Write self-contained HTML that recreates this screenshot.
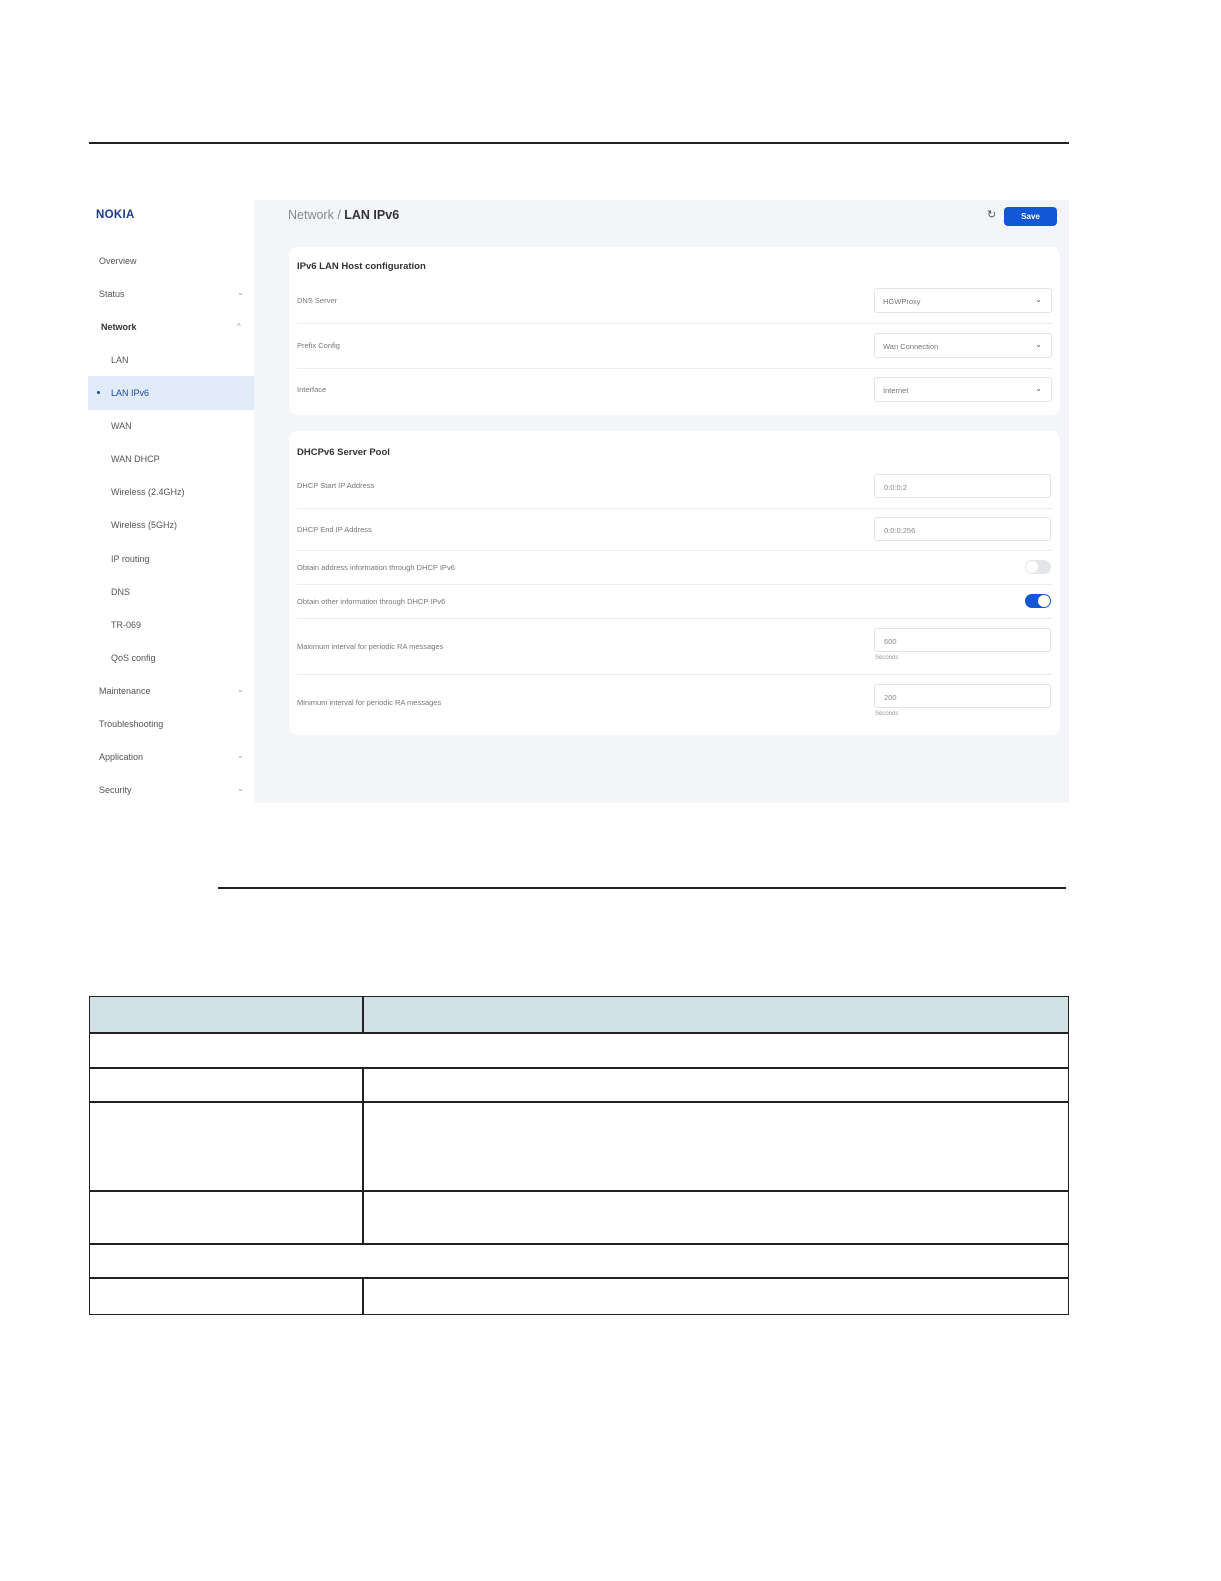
<!DOCTYPE html>
<html><head><meta charset="utf-8"><style>
*{margin:0;padding:0;box-sizing:border-box}
body{width:1221px;height:1581px;background:#fff;position:relative;font-family:"Liberation Sans",sans-serif;overflow:hidden}
.a{position:absolute}
.nav{font-size:9px;color:#555}
.lbl{font-size:7.5px;color:#777}
.sel{position:absolute;left:874px;width:178px;height:25px;border:1px solid #e2e5ea;border-radius:3px;background:#fff;font-size:7.5px;color:#777;padding:8px 0 0 8px}
.sel i{position:absolute;right:9px;top:6px;font-style:normal;font-size:8px;color:#555}
.inp{position:absolute;left:874px;width:177px;height:24px;border:1px solid #e2e5ea;border-radius:3px;background:#fff;font-size:7.5px;color:#888;padding:8px 0 0 9px}
.hr{position:absolute;left:297px;width:755px;height:1px;background:#e8ebef}
.chev{position:absolute;left:237px;font-size:8px;color:#999}
.tb{position:absolute;border:1.5px solid #222}
</style></head><body>
<div class="a" style="left:89px;top:142px;width:980px;height:2px;background:#222"></div>

<div class="a" style="left:88px;top:200px;width:166px;height:603px;background:#fff"></div>
<div class="a" style="left:254px;top:200px;width:815px;height:603px;background:#f3f5f8"></div>
<div class="a" style="left:96px;top:209px;font-size:11.5px;font-weight:bold;color:#1a3a8a;letter-spacing:0.3px">NOKIA</div>

<div class="a nav" style="left:99px;top:256px">Overview</div>
<div class="a nav" style="left:99px;top:289px">Status</div><div class="chev" style="top:288px">⌄</div>
<div class="a nav" style="left:101px;top:322px;font-weight:bold;color:#333">Network</div><div class="chev" style="top:322px">^</div>
<div class="a nav" style="left:111px;top:355px">LAN</div>
<div class="a" style="left:88px;top:376px;width:166px;height:34px;background:#e1ebf7"></div>
<div class="a" style="left:97px;top:391px;width:3px;height:3px;background:#1a4aa8;border-radius:50%"></div>
<div class="a nav" style="left:111px;top:388px;color:#1a4aa8">LAN IPv6</div>
<div class="a nav" style="left:111px;top:421px">WAN</div>
<div class="a nav" style="left:111px;top:454px">WAN DHCP</div>
<div class="a nav" style="left:111px;top:487px">Wireless (2.4GHz)</div>
<div class="a nav" style="left:111px;top:520px">Wireless (5GHz)</div>
<div class="a nav" style="left:111px;top:554px">IP routing</div>
<div class="a nav" style="left:111px;top:587px">DNS</div>
<div class="a nav" style="left:111px;top:620px">TR-069</div>
<div class="a nav" style="left:111px;top:653px">QoS config</div>
<div class="a nav" style="left:99px;top:686px">Maintenance</div><div class="chev" style="top:685px">⌄</div>
<div class="a nav" style="left:99px;top:719px">Troubleshooting</div>
<div class="a nav" style="left:99px;top:752px">Application</div><div class="chev" style="top:751px">⌄</div>
<div class="a nav" style="left:99px;top:785px">Security</div><div class="chev" style="top:784px">⌄</div>

<div class="a" style="left:288px;top:208px;font-size:12.5px;color:#888">Network / <b style="color:#333">LAN IPv6</b></div>
<div class="a" style="left:987px;top:208px;font-size:11px;color:#555">↻</div>
<div class="a" style="left:1004px;top:207px;width:53px;height:19px;background:#1257d6;border-radius:4px;color:#fff;font-size:8px;font-weight:bold;text-align:center;line-height:19px">Save</div>

<div class="a" style="left:289px;top:247px;width:771px;height:168px;background:#fff;border-radius:8px"></div>
<div class="a" style="left:297px;top:261px;font-size:9.5px;font-weight:bold;color:#333">IPv6 LAN Host configuration</div>
<div class="a lbl" style="left:297px;top:296px">DNS Server</div>
<div class="sel" style="top:288px">HGWProxy<i>⌄</i></div>
<div class="hr" style="top:323px"></div>
<div class="a lbl" style="left:297px;top:341px">Prefix Config</div>
<div class="sel" style="top:333px">Wan Connection<i>⌄</i></div>
<div class="hr" style="top:368px"></div>
<div class="a lbl" style="left:297px;top:385px">Interface</div>
<div class="sel" style="top:377px">Internet<i>⌄</i></div>

<div class="a" style="left:289px;top:431px;width:771px;height:304px;background:#fff;border-radius:8px"></div>
<div class="a" style="left:297px;top:447px;font-size:9.5px;font-weight:bold;color:#333">DHCPv6 Server Pool</div>
<div class="a lbl" style="left:297px;top:481px">DHCP Start IP Address</div>
<div class="inp" style="top:474px">0:0:0:2</div>
<div class="hr" style="top:508px"></div>
<div class="a lbl" style="left:297px;top:525px">DHCP End IP Address</div>
<div class="inp" style="top:517px">0:0:0:256</div>
<div class="hr" style="top:550px"></div>
<div class="a lbl" style="left:297px;top:563px">Obtain address information through DHCP IPv6</div>
<div class="a" style="left:1025px;top:560px;width:26px;height:14px;background:#e4e6ea;border-radius:7px"></div>
<div class="a" style="left:1026px;top:561px;width:12px;height:12px;background:#fff;border-radius:50%"></div>
<div class="hr" style="top:584px"></div>
<div class="a lbl" style="left:297px;top:597px">Obtain other information through DHCP IPv6</div>
<div class="a" style="left:1025px;top:594px;width:26px;height:14px;background:#1257d6;border-radius:7px"></div>
<div class="a" style="left:1038px;top:595px;width:12px;height:12px;background:#fff;border-radius:50%"></div>
<div class="hr" style="top:618px"></div>
<div class="a lbl" style="left:297px;top:642px">Maximum interval for periodic RA messages</div>
<div class="inp" style="top:628px">600</div>
<div class="a" style="left:875px;top:655px;font-size:6px;color:#999">Seconds</div>
<div class="hr" style="top:674px"></div>
<div class="a lbl" style="left:297px;top:698px">Minimum interval for periodic RA messages</div>
<div class="inp" style="top:684px">200</div>
<div class="a" style="left:875px;top:711px;font-size:6px;color:#999">Seconds</div>

<div class="a" style="left:218px;top:887px;width:848px;height:1.5px;background:#222"></div>

<div class="a" style="left:90px;top:997px;width:978px;height:35px;background:#d1e1e6"></div>
<div class="tb" style="left:89px;top:996px;width:980px;height:319px"></div>
<div class="a" style="left:89px;top:1032px;width:980px;height:1.5px;background:#222"></div>
<div class="a" style="left:89px;top:1067px;width:980px;height:1.5px;background:#222"></div>
<div class="a" style="left:89px;top:1101px;width:980px;height:1.5px;background:#222"></div>
<div class="a" style="left:89px;top:1190px;width:980px;height:1.5px;background:#222"></div>
<div class="a" style="left:89px;top:1243px;width:980px;height:1.5px;background:#222"></div>
<div class="a" style="left:89px;top:1277px;width:980px;height:1.5px;background:#222"></div>
<div class="a" style="left:362px;top:997px;width:1.5px;height:35px;background:#222"></div>
<div class="a" style="left:362px;top:1067px;width:1.5px;height:177px;background:#222"></div>
<div class="a" style="left:362px;top:1278px;width:1.5px;height:36px;background:#222"></div>
</body></html>
